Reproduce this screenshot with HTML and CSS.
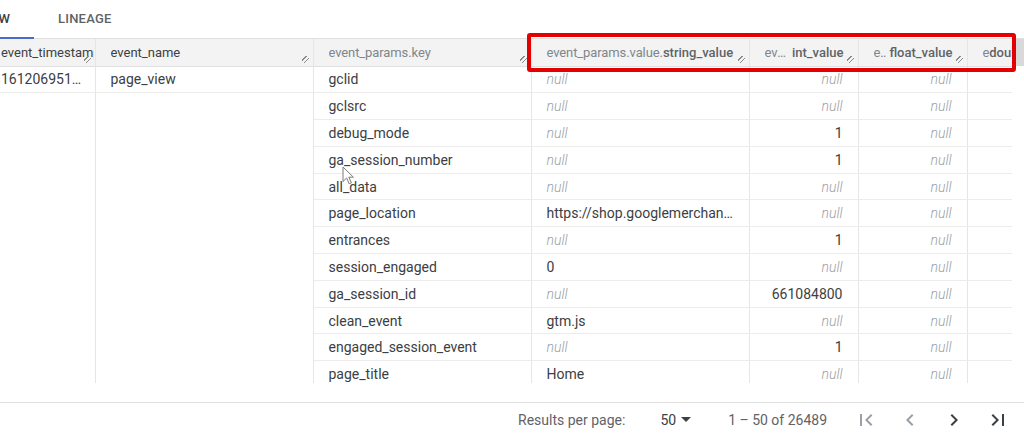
FILE: index.html
```html
<!DOCTYPE html>
<html lang="en">
<head>
    <meta charset="UTF-8">
    <meta name="viewport" content="width=device-width, initial-scale=1.0">
    <title>Query results</title>
    <link rel="stylesheet" href="styles.css">
</head>
<body>
    <div class="tabs">
        <div class="tab active">PREVIEW</div>
        <div class="tab">LINEAGE</div>
    </div>

    <div class="grid-area">
        <div class="table-wrap">
            <table class="results">
                <colgroup>
                    <col class="w-ts">
                    <col class="w-wide">
                    <col class="w-wide">
                    <col class="w-wide">
                    <col class="w-num">
                    <col class="w-num">
                    <col class="w-last">
                </colgroup>
                <thead>
                    <tr>
                        <th class="first"><span class="plain">event_timestamp</span><span class="grip"></span></th>
                        <th><span class="plain">event_name</span><span class="grip"></span></th>
                        <th><div class="head"><span class="path">event_params.</span><span class="leaf light">key</span></div><span class="grip"></span></th>
                        <th><div class="head"><span class="path">event_params.value.</span><span class="leaf">string_value</span></div><span class="grip"></span></th>
                        <th class="numh"><div class="head"><span class="path">event_params.value.</span><span class="leaf gap">int_value</span></div><span class="grip"></span></th>
                        <th class="numh"><div class="head"><span class="path">event_params.value.</span><span class="leaf gap">float_value</span></div><span class="grip"></span></th>
                        <th class="last"><div class="head"><span class="path clip">e</span><span class="leaf">double_value</span></div></th>
                    </tr>
                </thead>
                <tbody>
                    <tr>
                        <td class="ellip first">1612069510766241</td>
                        <td>page_view</td>
                        <td>gclid</td>
                        <td class="null">null</td>
                        <td class="num null">null</td>
                        <td class="num null">null</td>
                        <td class="last"></td>
                    </tr>
                    <tr>
                        <td class="merged" rowspan="11"></td>
                        <td class="merged" rowspan="11"></td>
                        <td>gclsrc</td>
                        <td class="null">null</td>
                        <td class="num null">null</td>
                        <td class="num null">null</td>
                        <td class="last"></td>
                    </tr>
                    <tr>
                        <td>debug_mode</td>
                        <td class="null">null</td>
                        <td class="num">1</td>
                        <td class="num null">null</td>
                        <td class="last"></td>
                    </tr>
                    <tr>
                        <td>ga_session_number</td>
                        <td class="null">null</td>
                        <td class="num">1</td>
                        <td class="num null">null</td>
                        <td class="last"></td>
                    </tr>
                    <tr>
                        <td>all_data</td>
                        <td class="null">null</td>
                        <td class="num null">null</td>
                        <td class="num null">null</td>
                        <td class="last"></td>
                    </tr>
                    <tr>
                        <td>page_location</td>
                        <td class="ellip">https://shop.googlemerchandisestore.com/</td>
                        <td class="num null">null</td>
                        <td class="num null">null</td>
                        <td class="last"></td>
                    </tr>
                    <tr>
                        <td>entrances</td>
                        <td class="null">null</td>
                        <td class="num">1</td>
                        <td class="num null">null</td>
                        <td class="last"></td>
                    </tr>
                    <tr>
                        <td>session_engaged</td>
                        <td>0</td>
                        <td class="num null">null</td>
                        <td class="num null">null</td>
                        <td class="last"></td>
                    </tr>
                    <tr>
                        <td>ga_session_id</td>
                        <td class="null">null</td>
                        <td class="num">661084800</td>
                        <td class="num null">null</td>
                        <td class="last"></td>
                    </tr>
                    <tr>
                        <td>clean_event</td>
                        <td>gtm.js</td>
                        <td class="num null">null</td>
                        <td class="num null">null</td>
                        <td class="last"></td>
                    </tr>
                    <tr>
                        <td>engaged_session_event</td>
                        <td class="null">null</td>
                        <td class="num">1</td>
                        <td class="num null">null</td>
                        <td class="last"></td>
                    </tr>
                    <tr>
                        <td>page_title</td>
                        <td>Home</td>
                        <td class="num null">null</td>
                        <td class="num null">null</td>
                        <td class="last"></td>
                    </tr>
                </tbody>
            </table>
        </div>
        <div class="gutter"><div class="gutter-head"></div></div>

        <!-- highlight drawn over the nested value columns -->
        <div class="highlight"></div>

        <svg class="cursor" width="12" height="19" viewBox="0 0 12 19">
            <path d="M1 1 L1 15.5 L4.6 12 L7.2 17.8 L9.4 16.8 L6.8 11.2 L11.4 11.2 Z" fill="#fff" stroke="#7a7a7a" stroke-width="1"/>
        </svg>
    </div>

    <div class="pager">
        <span class="pager-label">Results per page:</span>
        <span class="page-size">50 <span class="caret"></span></span>
        <span class="range">1 – 50 of 26489</span>
        <span class="pager-btn disabled">
            <svg width="24" height="24" viewBox="0 0 24 24"><path d="M18.41 16.59L13.82 12l4.59-4.59L17 6l-6 6 6 6zM6 6h2v12H6z"/></svg>
        </span>
        <span class="pager-btn disabled">
            <svg width="24" height="24" viewBox="0 0 24 24"><path d="M15.41 7.41L14 6l-6 6 6 6 1.41-1.41L10.83 12z"/></svg>
        </span>
        <span class="pager-btn">
            <svg width="24" height="24" viewBox="0 0 24 24"><path d="M10 6L8.59 7.41 13.17 12l-4.58 4.59L10 18l6-6z"/></svg>
        </span>
        <span class="pager-btn">
            <svg width="24" height="24" viewBox="0 0 24 24"><path d="M5.59 7.41L10.18 12l-4.59 4.59L7 18l6-6-6-6zM16 6h2v12h-2z"/></svg>
        </span>
    </div>
</body>
</html>
```

FILE: styles.css
```css
body {
    margin: 0;
    font-family: Roboto, "Liberation Sans", Arial, sans-serif;
    color: #3c4043;
    background-color: #ffffff;
    overflow: hidden;
    width: 1024px;
    height: 435px;
}

/* tabs */
.tabs {
    display: flex;
    height: 38px;
    border-bottom: 1px solid #e0e0e0;
    margin-left: -70px;
}
.tab {
    display: flex;
    align-items: center;
    padding: 0 24px;
    font-size: 13px;
    font-weight: 500;
    letter-spacing: 0.2px;
    color: #5f6368;
    border-bottom: 2px solid transparent;
    margin-bottom: -1px;
}
.tab.active {
    color: #3c4043;
    border-bottom-color: #4a6cc8;
}

/* results grid */
.grid-area {
    position: relative;
    display: flex;
    height: 344px;
}
.table-wrap {
    width: 1012px;
    overflow: hidden;
}
.gutter {
    flex: 1;
}
.gutter-head {
    height: 27px;
    background-color: #d9d9d9;
}
.results {
    margin-left: -14px;
    border-collapse: collapse;
    table-layout: fixed;
    width: 1026px;
}
.w-ts { width: 109px; }
.w-wide { width: 218px; }
.w-num { width: 109px; }
.w-last { width: 45px; }

.results th,
.results td {
    height: 26.8px;
    box-sizing: border-box;
    padding: 0 15px;
    border-right: 1px solid #e6e6e6;
    white-space: nowrap;
    overflow: hidden;
    text-align: left;
}
.results th {
    position: relative;
    height: 27px;
    padding-right: 8px;
    background-color: #f3f3f3;
    border-bottom: 1px solid #e0e0e0;
    font-size: 13px;
    font-weight: 400;
    color: #3c4043;
}
.results th.numh {
    padding-right: 14px;
}
.results td {
    font-size: 14px;
    border-bottom: 1px solid #ececec;
}
.results td.first {
    padding-right: 8px;
}
.results th.first {
    padding-right: 1px;
}
.results .last {
    padding-right: 0;
    border-right: none;
}
.results td.merged {
    border-bottom: none;
}
.results td.num {
    text-align: right;
}
.results td.null {
    font-style: italic;
    font-weight: 300;
    color: #9aa0a6;
}
.results td.ellip {
    text-overflow: ellipsis;
}

.head {
    display: flex;
    color: #80868b;
}
.head .path {
    min-width: 0;
    overflow: hidden;
    text-overflow: ellipsis;
    letter-spacing: -0.1px;
}
.head .path.clip {
    flex: none;
    text-overflow: clip;
}
.head .leaf {
    flex: none;
    font-weight: 500;
    color: #5f6368;
}
.head .leaf.gap {
    margin-left: 3px;
}
.head .leaf.light {
    font-weight: 400;
    color: #80868b;
}
.plain {
    display: block;
    overflow: hidden;
}

/* column resize grip */
.grip {
    position: absolute;
    right: 4px;
    bottom: 3px;
    width: 7px;
    height: 7px;
    background-image:
        linear-gradient(-45deg, transparent 30%, #8a8a8a 30%, #8a8a8a 42%, transparent 42%, transparent 62%, #8a8a8a 62%, #8a8a8a 74%, transparent 74%);
}

.highlight {
    position: absolute;
    left: 527px;
    top: -6px;
    width: 481px;
    height: 31px;
    border: 4px solid #e30000;
    border-radius: 3px;
}
.cursor {
    position: absolute;
    left: 342px;
    top: 127px;
}

/* pagination */
.pager {
    display: flex;
    align-items: center;
    justify-content: flex-end;
    height: 33px;
    margin-top: 19px;
    padding-right: 4px;
    border-top: 1px solid #e0e0e0;
    font-size: 14px;
    color: #5f6368;
}
.pager-label {
    margin-right: 35px;
}
.page-size {
    display: flex;
    align-items: center;
    color: #3c4043;
    margin-right: 37px;
}
.caret {
    display: inline-block;
    margin-left: 5px;
    border-left: 5px solid transparent;
    border-right: 5px solid transparent;
    border-top: 5px solid #3c4043;
}
.range {
    margin-right: 17px;
}
.pager-btn {
    display: flex;
    justify-content: center;
    align-items: center;
    width: 44px;
    height: 32px;
    fill: #3c4043;
}
.pager-btn.disabled {
    fill: #9aa0a6;
}
```
